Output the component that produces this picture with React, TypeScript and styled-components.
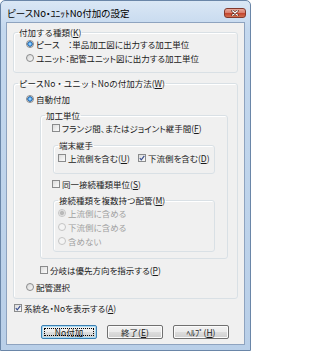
import styled, { createGlobalStyle } from "styled-components"

const GlobalStyle = createGlobalStyle`
  html, body {
    margin: 0;
    padding: 0;
    background: #ffffff;
  }
  body {
    font-family: "Noto Sans CJK JP", "Noto Sans", sans-serif;
    font-feature-settings: "palt";
  }
`

const Window = styled.div`
  width: 251px;
  height: 351px;
  box-sizing: border-box;
  border: 1px solid #6a86a8;
  border-radius: 5px 5px 0 0;
  background: linear-gradient(180deg, #dae7f5 0%, #c4d8ee 8%, #b9cfe8 100%);
  display: flex;
  flex-direction: column;
  overflow: hidden;
`

const TitleBar = styled.div`
  height: 21px;
  box-sizing: border-box;
  padding: 3px 4px 0 6px;
  display: flex;
  align-items: center;
  justify-content: space-between;
`

const Title = styled.span`
  font-size: 9.5px;
  line-height: 10px;
  color: #000;
`

const CloseButton = styled.div`
  width: 22px;
  height: 10px;
  box-sizing: border-box;
  border: 1px solid #83392c;
  border-radius: 3px;
  background: linear-gradient(180deg, #e9a99b 0%, #d9806e 45%, #c4452f 55%, #d2704f 100%);
  display: flex;
  align-items: center;
  justify-content: center;
`

const Client = styled.div`
  margin: 0 5px 5px;
  height: 323px;
  box-sizing: border-box;
  border: 1px solid #8ea3bf;
  background: #f0f0f0;
  padding: 4px 6px 0;
  display: flex;
  flex-direction: column;
`

const Group = styled.fieldset<{ $mt?: number; $ml?: number }>`
  margin: ${p => p.$mt ?? 0}px 0 0 ${p => p.$ml ?? 0}px;
  padding: 0;
  min-width: 0;
  border: 1px solid #d9e0e5;
  border-radius: 3px;
  box-shadow: inset 1px 1px 0 #ffffff;
`

const Legend = styled.legend`
  margin-left: 4px;
  padding: 0 1px;
  font-size: 8.5px;
  line-height: 10px;
  font-feature-settings: normal;
  color: #1a1a1a;
`

const GroupBody = styled.div<{ $pad: string }>`
  padding: ${p => p.$pad};
  display: flex;
  flex-direction: column;
`

const Row = styled.div<{ $mt?: number; $ml?: number }>`
  height: 14px;
  margin-top: ${p => p.$mt ?? 0}px;
  margin-left: ${p => p.$ml ?? 0}px;
  display: flex;
  align-items: center;
`

const Item = styled.label<{ $width?: number; $disabled?: boolean }>`
  display: flex;
  align-items: center;
  gap: 2px;
  width: ${p => (p.$width ? `${p.$width}px` : "auto")};
  font-size: 8.5px;
  line-height: 10px;
  white-space: nowrap;
  color: ${p => (p.$disabled ? "#a0a0a0" : "#1a1a1a")};
`

const Accel = styled.span`
  text-decoration: underline;
  text-underline-offset: 1px;
`

const RadioCircle = styled.span<{ $on?: boolean; $disabled?: boolean }>`
  width: 8px;
  height: 8px;
  box-sizing: border-box;
  border-radius: 50%;
  border: 1px solid ${p => (p.$disabled ? "#c4c4c4" : "#8a8b8c")};
  background: ${p =>
    p.$on
      ? p.$disabled
        ? "radial-gradient(circle, #b9b9b9 0 1.6px, #d4d4d4 2.2px, #f4f4f4 3px)"
        : "radial-gradient(circle, #8fd0ff 0 0.8px, #2f7fd0 2px, #1d5a98 2.4px, #e6e6e6 3px)"
      : p.$disabled
        ? "#f4f4f4"
        : "linear-gradient(135deg, #d8d8d8, #f8f8f8)"};
  flex: none;
`

const CheckBox = styled.span`
  width: 8px;
  height: 8px;
  box-sizing: border-box;
  border: 1px solid #8a8b8c;
  background: linear-gradient(135deg, #dcdcdc, #fbfbfb);
  display: flex;
  align-items: center;
  justify-content: center;
  flex: none;
`

const Buttons = styled.div`
  margin-top: 10px;
  padding-left: 28px;
  display: flex;
  gap: 10px;
`

const Button = styled.div<{ $default?: boolean }>`
  width: 56px;
  height: 14px;
  box-sizing: border-box;
  border: 1px solid ${p => (p.$default ? "#3c7fb1" : "#707070")};
  border-radius: 2px;
  background: linear-gradient(180deg, #f2f2f2 0%, #ebebeb 50%, #dddddd 51%, #cfcfcf 100%);
  box-shadow: ${p => (p.$default ? "inset 0 0 0 1px #a8dcf6" : "inset 0 0 0 1px #fbfbfb")};
  display: flex;
  align-items: center;
  justify-content: center;
  padding: 2px;
  font-size: 8.5px;
  line-height: 10px;
  color: #1a1a1a;
`

const FocusRect = styled.span`
  flex: 1;
  align-self: stretch;
  display: flex;
  align-items: center;
  justify-content: center;
  outline: 1px dotted #000;
  outline-offset: -1px;
`

function Radio({ on, disabled, width, children }: { on?: boolean; disabled?: boolean; width?: number; children: React.ReactNode }) {
  return (
    <Item $disabled={disabled} $width={width}>
      <RadioCircle $on={on} $disabled={disabled} />
      <span>{children}</span>
    </Item>
  )
}

function Check({ on, width, children }: { on?: boolean; width?: number; children: React.ReactNode }) {
  return (
    <Item $width={width}>
      <CheckBox>
        {on && (
          <svg width="6" height="6" viewBox="0 0 6 6">
            <path d="M0.8 3.2 L2.3 4.8 L5.3 0.9" fill="none" stroke="#3a4f8f" strokeWidth="1.2" />
          </svg>
        )}
      </CheckBox>
      <span>{children}</span>
    </Item>
  )
}

export default function App() {
  return (
    <>
      <GlobalStyle />
      <Window>
        <TitleBar>
          <Title>ピースNo・ﾕﾆｯﾄNo付加の設定</Title>
          <CloseButton>
            <svg width="8" height="6" viewBox="0 0 8 6">
              <path d="M1.5 0.8 L6.5 5.2 M6.5 0.8 L1.5 5.2" stroke="#5a2418" strokeWidth="2.4" strokeLinecap="round" />
              <path d="M1.5 0.8 L6.5 5.2 M6.5 0.8 L1.5 5.2" stroke="#ffffff" strokeWidth="1.2" strokeLinecap="round" />
            </svg>
          </CloseButton>
        </TitleBar>
        <Client>
          <Group>
            <Legend>付加する種類(<Accel>K</Accel>)</Legend>
            <GroupBody $pad="0 0 7px 12px">
              <Row><Radio on>ピース　：単品加工図に出力する加工単位</Radio></Row>
              <Row><Radio>ユニット：配管ユニット図に出力する加工単位</Radio></Row>
            </GroupBody>
          </Group>

          <Group $mt={5}>
            <Legend>ピースNo・ユニットNoの付加方法(<Accel>W</Accel>)</Legend>
            <GroupBody $pad="4px 9px 4px 12px">
              <Row><Radio on>自動付加</Radio></Row>

              <Group $mt={4} $ml={14}>
                <Legend>加工単位</Legend>
                <GroupBody $pad="1px 12px 6px 11px">
                  <Row><Check>フランジ間、またはジョイント継手間(<Accel>F</Accel>)</Check></Row>

                  <Group $mt={5} $ml={1}>
                    <Legend>端末継手</Legend>
                    <GroupBody $pad="1px 0 8px 4px">
                      <Row>
                        <Check width={80}>上流側を含む(<Accel>U</Accel>)</Check>
                        <Check on>下流側を含む(<Accel>D</Accel>)</Check>
                      </Row>
                    </GroupBody>
                  </Group>

                  <Row $mt={3}><Check>同一接続種類単位(<Accel>S</Accel>)</Check></Row>

                  <Group $mt={4} $ml={1}>
                    <Legend>接続種類を複数持つ配管(<Accel>M</Accel>)</Legend>
                    <GroupBody $pad="1px 0 3px 4px">
                      <Row><Radio on disabled>上流側に含める</Radio></Row>
                      <Row><Radio disabled>下流側に含める</Radio></Row>
                      <Row><Radio disabled>含めない</Radio></Row>
                    </GroupBody>
                  </Group>
                </GroupBody>
              </Group>

              <Row $mt={4} $ml={14}><Check>分岐は優先方向を指示する(<Accel>P</Accel>)</Check></Row>
              <Row $mt={3}><Radio>配管選択</Radio></Row>
            </GroupBody>
          </Group>

          <Row $mt={2} $ml={1}><Check on>系統名・Noを表示する(<Accel>A</Accel>)</Check></Row>

          <Buttons>
            <Button $default><FocusRect>No付加</FocusRect></Button>
            <Button>終了(<Accel>E</Accel>)</Button>
            <Button>ﾍﾙﾌﾟ(<Accel>H</Accel>)</Button>
          </Buttons>
        </Client>
      </Window>
    </>
  )
}
